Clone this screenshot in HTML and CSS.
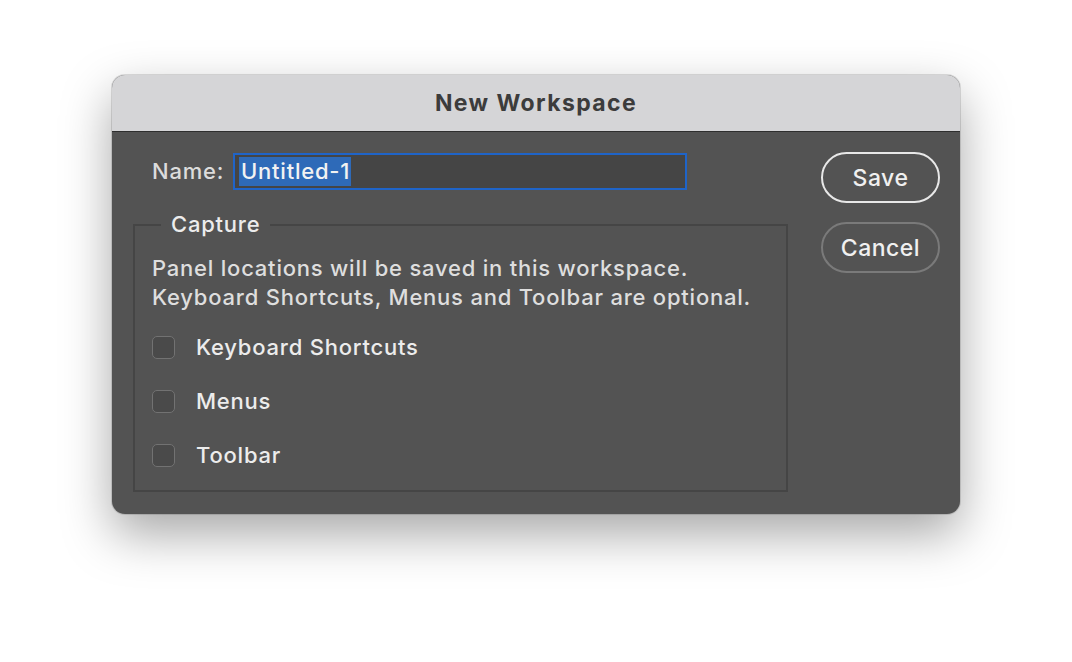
FILE: index.html
```html
<!DOCTYPE html>
<html>
<head>
<meta charset="utf-8">
<link rel="stylesheet" href="styles.css">
</head>
<body>
<div class="stage">
  <div class="dialog">
    <div class="titlebar">New Workspace</div>
    <div class="body">
      <div class="main">
        <div class="name-row">
          <span class="label">Name:</span>
          <div class="input"><span class="sel">Untitled-1</span></div>
        </div>
        <div class="capture">
          <div class="legend">Capture</div>
          <p class="desc">Panel locations will be saved in this workspace.<br>Keyboard Shortcuts, Menus and Toolbar are optional.</p>
          <div class="check"><span class="box"></span><span>Keyboard Shortcuts</span></div>
          <div class="check"><span class="box"></span><span>Menus</span></div>
          <div class="check"><span class="box"></span><span>Toolbar</span></div>
        </div>
      </div>
      <div class="buttons">
        <div class="btn primary">Save</div>
        <div class="btn">Cancel</div>
      </div>
    </div>
  </div>
</div>
</body>
</html>
```
FILE: styles.css
```css
html, body { margin: 0; padding: 0; background: #ffffff; }
body { font-family: Inter, "Liberation Sans", sans-serif; }
.stage { width: 1072px; height: 662px; padding-top: 75px; padding-left: 112px; box-sizing: border-box; }
.dialog {
  width: 848px; height: 439px; border-radius: 13px; overflow: hidden;
  background: #535353;
  box-shadow: 0 20px 50px rgba(0,0,0,0.35), 0 0 0 1px rgba(0,0,0,0.12);
  display: flex; flex-direction: column;
}
.titlebar {
  height: 56px; background: #d5d5d7; border-bottom: 1px solid #2e2e2e;
  display: flex; align-items: center; justify-content: center;
  font-weight: 700; font-size: 23px; color: #3c3c3c; letter-spacing: 1.4px;
}
.body { flex: 1; display: flex; padding: 20px 20px 0 21px; color: #e6e6e6; font-size: 22px; font-weight: 500; letter-spacing: 0.78px; }
.main { width: 655px; }
.name-row { display: flex; align-items: center; padding-left: 19px; height: 38px; }
.label { color: #dcdcdc; width: 81px; }
.input {
  width: 446px; height: 33px; border: 2px solid #1f64c8; background: #454545;
  display: flex; align-items: center; padding-left: 4px; box-sizing: content-box;
}
.sel { background: #2e6ab8; color: #f2f2f2; line-height: 29px; padding: 0 1px 0 2px; }
.capture {
  margin-top: 34px; border: 2px solid #454545; height: 268px; box-sizing: border-box;
  position: relative; padding: 28px 0 0 17px;
}
.legend {
  position: absolute; top: -16px; left: 26px; background: #535353; padding: 0 10px;
  line-height: 28px; color: #ececec;
}
.desc { margin: 0 0 8px; line-height: 29px; color: #dedede; }
.check { display: flex; align-items: center; height: 54px; color: #ececec; }
.box {
  width: 21px; height: 21px; border: 1.5px solid #727272; border-radius: 5px; background: #4a4a4a;
  margin-right: 21px;
}
.buttons { margin-left: 33px; display: flex; flex-direction: column; gap: 19px; }
.btn {
  width: 119px; height: 51px; box-sizing: border-box; border-radius: 26px;
  border: 2px solid #7a7a7a; display: flex; align-items: center; justify-content: center;
  font-size: 23px; color: #f0f0f0; letter-spacing: 0.5px;
}
.btn.primary { border-color: #e8e8e8; }
```
